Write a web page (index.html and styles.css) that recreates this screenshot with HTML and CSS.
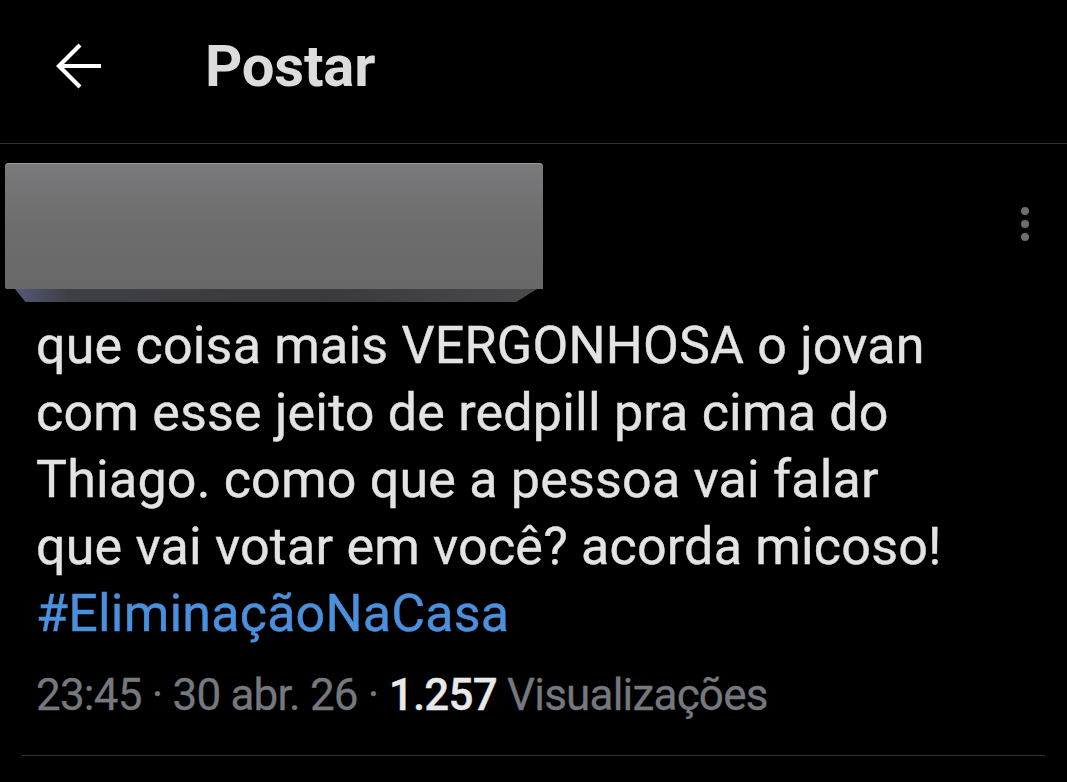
FILE: index.html
```html
<!DOCTYPE html>
<html lang="pt-BR">
<head>
<meta charset="utf-8">
<link rel="stylesheet" href="styles.css">
</head>
<body>
<header class="topbar">
  <span class="back">
    <svg width="48" height="48" viewBox="0 0 48 48"><path d="M45 24H4M24 3L3 24l21 21" fill="none" stroke="#fff" stroke-width="4.2"/></svg>
  </span>
  <h1 class="title">Postar</h1>
</header>
<main class="post">
  <div class="author">
    <div class="redact"><div class="face"></div><div class="bevel"></div></div>
    <div class="more"><i></i><i></i><i></i></div>
  </div>
  <p class="text">que coisa mais VERGONHOSA o jovan com esse jeito de redpill pra cima do Thiago. como que a pessoa vai falar que vai votar em você? acorda micoso! <span class="tag">#EliminaçãoNaCasa</span></p>
  <div class="meta">23:45 · 30 abr. 26 · <b>1.257</b> Visualizações</div>
  <div class="rule"></div>
</main>
</body>
</html>
```

FILE: styles.css
```css
html, body {
  margin: 0;
  padding: 0;
  background: #000;
  height: 782px;
  overflow: hidden;
}
body {
  font-family: Roboto, "Liberation Sans", sans-serif;
  color: #e7e9ea;
}
.topbar {
  height: 143px;
  border-bottom: 1px solid #2f3336;
  display: flex;
  align-items: center;
  box-sizing: content-box;
}
.back {
  display: flex;
  margin-left: 56px;
  margin-top: -12px;
}
.title {
  margin: -12px 0 0 101px;
  font-size: 58px;
  font-weight: 700;
  color: #dcdcdc;
  letter-spacing: -0.2px;
}
.post {
  padding: 0 22px;
}
.author {
  display: flex;
  justify-content: space-between;
  align-items: flex-start;
  padding-top: 19px;
}
.redact {
  margin-left: -17px;
  width: 538px;
  height: 140px;
  display: flex;
  flex-direction: column;
}
.face {
  height: 126px;
  border-radius: 4px 4px 0 2px;
  background: linear-gradient(180deg, #7a7a7c 0%, #6d6d6e 50%, #686869 100%);
  box-shadow: inset 0 1px 0 #9a9a9c;
}
.bevel {
  height: 13px;
  margin: 0 6px 0 10px;
  background: linear-gradient(90deg, #55597a 0%, #3e3f46 10%, #3a3a3c 60%, #4a4a4d 100%);
  clip-path: polygon(0 0, 100% 0, 96% 100%, 2% 100%);
}
.more {
  display: flex;
  flex-direction: column;
  gap: 5px;
  margin: 44px 16px 0 0;
}
.more i {
  display: block;
  width: 8px;
  height: 8px;
  border-radius: 50%;
  background: #6e6e70;
}
.text {
  margin: 9px 0 0 14px;
  font-size: 52px;
  line-height: 67px;
  color: #e3e3e3;
  width: 912px;
  letter-spacing: 0.2px;
  -webkit-text-stroke: 0.4px #e3e3e3;
}
.tag {
  color: #4a90dd;
  -webkit-text-stroke-color: #4a90dd;
}
.meta {
  margin: 22px 0 0 14px;
  font-size: 44px;
  line-height: 52px;
  color: #75787d;
  letter-spacing: -0.8px;
  -webkit-text-stroke: 0.3px #75787d;
}
.meta b {
  color: #e7e9ea;
  font-weight: 500;
  -webkit-text-stroke-color: #e7e9ea;
}
.rule {
  margin-top: 34px;
  height: 1px;
  background: #2f3336;
}
```
